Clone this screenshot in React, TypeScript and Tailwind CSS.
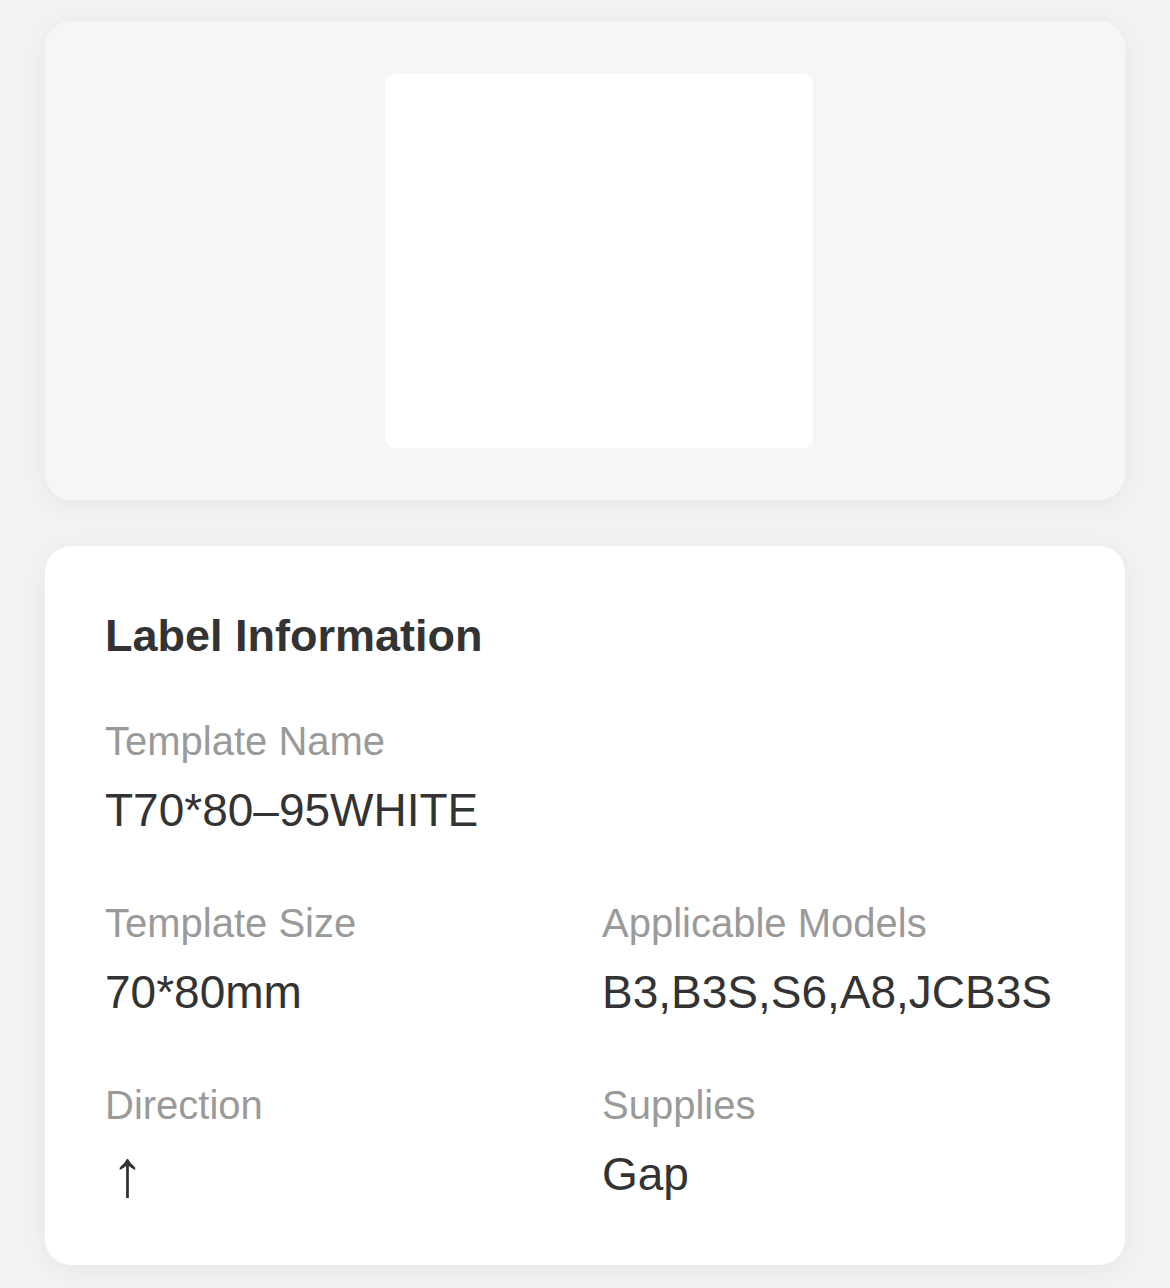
import React from "react";

const font = { fontFamily: '"Liberation Sans", Arial, sans-serif' };

function Field({
  label,
  value,
  className = "",
  valueClass = "",
}: {
  label: string;
  value: string;
  className?: string;
  valueClass?: string;
}) {
  return (
    <div className={className}>
      <div className="text-[40px] leading-[48px] text-[#9a9a9a]">{label}</div>
      <div className={"mt-[17px] h-[56px] text-[46px] leading-[56px] text-[#333333] " + valueClass}>{value}</div>
    </div>
  );
}

export default function App() {
  return (
    <div className="min-h-screen w-full bg-[#f2f2f2] px-[45px] pt-[21px] pb-[23px]" style={font}>
      <div className="flex h-[479px] items-center rounded-[26px] bg-[#f6f6f6] pl-[340px] shadow-[0_4px_24px_rgba(0,0,0,0.05)]">
        <div className="h-[374px] w-[428px] rounded-[10px] bg-white" />
      </div>

      <div className="mt-[46px] rounded-[26px] bg-white px-[60px] pt-[64px] pb-[63px] shadow-[0_4px_24px_rgba(0,0,0,0.05)]">
        <div className="text-[45px] font-bold leading-[52px] text-[#333333]">Label Information</div>

        <Field className="mt-[55px]" label="Template Name" value="T70*80–95WHITE" />

        <div className="mt-[61px] grid grid-cols-[497px_1fr] gap-y-[61px]">
          <Field label="Template Size" value="70*80mm" />
          <Field label="Applicable Models" value="B3,B3S,S6,A8,JCB3S" />
          <div>
            <div className="text-[40px] leading-[48px] text-[#9a9a9a]">Direction</div>
            <div className="mt-[17px] h-[56px] overflow-visible pl-[6px] text-[66px] leading-[54px] text-[#333333]">↑</div>
          </div>
          <Field label="Supplies" value="Gap" />
        </div>
      </div>
    </div>
  );
}
